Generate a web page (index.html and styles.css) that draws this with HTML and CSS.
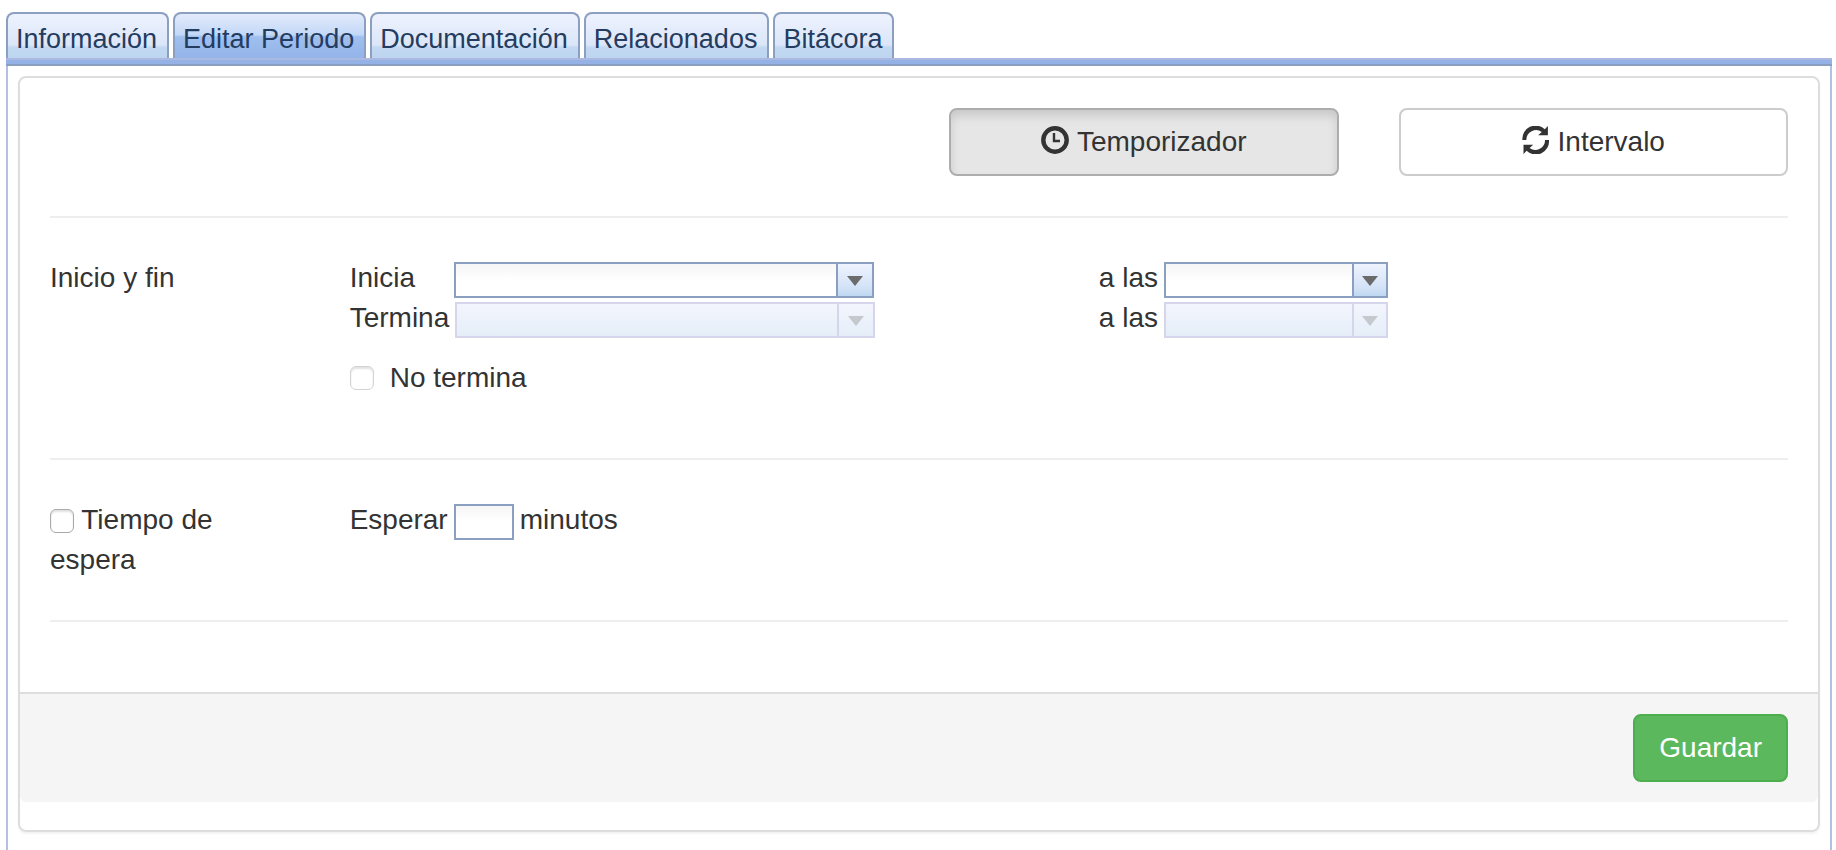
FILE: index.html
```html
<!DOCTYPE html>
<html lang="es">
<head>
<meta charset="utf-8">
<title>Editar Periodo</title>
<link rel="stylesheet" href="styles.css">
</head>
<body>
<div class="tabs" role="tablist">
  <button type="button" class="tab" role="tab">Información</button>
  <button type="button" class="tab tab-active" role="tab" aria-selected="true">Editar Periodo</button>
  <button type="button" class="tab" role="tab">Documentación</button>
  <button type="button" class="tab" role="tab">Relacionados</button>
  <button type="button" class="tab" role="tab">Bitácora</button>
</div>
<div class="tab-bar"></div>
<main class="tab-content">
  <form class="panel">
    <div class="panel-body">
      <div class="row row-modes">
        <button type="button" class="btn btn-timer active" aria-pressed="true">
          <svg class="icon" viewBox="0 0 28 28" aria-hidden="true"><circle cx="14" cy="14" r="11.7" fill="none" stroke="currentColor" stroke-width="4.4"/><path d="M13 7v8h6" fill="none" stroke="currentColor" stroke-width="2.400"/></svg>
          <span>Temporizador</span>
        </button>
        <button type="button" class="btn btn-interval" aria-pressed="false">
          <svg class="icon" viewBox="0 0 28 28" aria-hidden="true"><path d="M.4 14A13.300 13.300 0 0 1 22.800 3.200L25.900 0V9.300H16.200L19.800 5.900A9.900 9.900 0 0 0 4.300 14Z" fill="currentColor"/><path d="M27 14A13.300 13.300 0 0 1 4.600 24.800L1.500 28V18.700H11.200L7.600 22.100A9.900 9.900 0 0 0 23.100 14Z" fill="currentColor"/></svg>
          <span>Intervalo</span>
        </button>
      </div>
      <hr class="rule">
      <div class="row row-range">
        <div class="row-title">Inicio y fin</div>
        <div class="row-main">
          <div class="field">
            <label for="start-date" class="field-label">Inicia</label>
            <span class="combo combo-date"><input type="text" id="start-date" class="combo-input"><button type="button" class="combo-button" aria-label="Elegir fecha de inicio"><svg class="arrow" viewBox="0 0 18 12" aria-hidden="true"><path d="M1 1h16L9 11Z"/></svg></button></span>
          </div>
          <div class="field">
            <label for="end-date" class="field-label">Termina</label>
            <span class="combo combo-date combo-disabled"><input type="text" id="end-date" class="combo-input" disabled><button type="button" class="combo-button" disabled aria-label="Elegir fecha de término"><svg class="arrow" viewBox="0 0 18 12" aria-hidden="true"><path d="M1 1h16L9 11Z"/></svg></button></span>
          </div>
          <label class="never-ends"><input type="checkbox" class="check" disabled>No termina</label>
        </div>
        <div class="row-side">
          <div class="field">
            <label for="start-time">a las</label>
            <span class="combo combo-time"><input type="text" id="start-time" class="combo-input"><button type="button" class="combo-button" aria-label="Elegir hora de inicio"><svg class="arrow" viewBox="0 0 18 12" aria-hidden="true"><path d="M1 1h16L9 11Z"/></svg></button></span>
          </div>
          <div class="field">
            <label for="end-time">a las</label>
            <span class="combo combo-time combo-disabled"><input type="text" id="end-time" class="combo-input" disabled><button type="button" class="combo-button" disabled aria-label="Elegir hora de término"><svg class="arrow" viewBox="0 0 18 12" aria-hidden="true"><path d="M1 1h16L9 11Z"/></svg></button></span>
          </div>
        </div>
      </div>
      <hr class="rule">
      <div class="row">
        <label class="row-title wait-label"><input type="checkbox" class="check"> Tiempo de espera</label>
        <div class="row-main">
          <div class="field">
            <label for="wait" class="field-label">Esperar</label>
            <input type="text" id="wait" class="minutes">
            <span>minutos</span>
          </div>
        </div>
      </div>
      <hr class="rule">
    </div>
    <div class="panel-footer">
      <button type="submit" class="btn btn-save">Guardar</button>
    </div>
  </form>
</main>
</body>
</html>
```
FILE: styles.css
```css
* {
  box-sizing: border-box;
}

html,
body {
  height: 100%;
}

body {
  display: flex;
  flex-direction: column;
  margin: 0;
  padding: 12px 4px 0 6px;
  background: #fff;
  color: #333;
  font: 28px/40px "Liberation Sans", Arial, sans-serif;
}

button,
input {
  font: inherit;
  color: inherit;
}

/* Tabs */
.tabs {
  display: flex;
  gap: 4px;
}

.tab {
  height: 46px;
  padding: 6px 10px 0 8px;
  border: 2px solid #8ba0c0;
  border-bottom: 0;
  border-radius: 8px 8px 0 0;
  background: linear-gradient(#eef2fe 0, #dbe6f8 70%, #c3d9f2 76%, #bdd5f0 100%);
  color: #243c5f;
  font-size: 27px;
  line-height: 38px;
}

.tab-active {
  background: linear-gradient(#e2ebfb 0, #c3d8f8 47%, #9fbfee 52%, #94b4ea 100%);
}

.tab-bar {
  height: 8px;
  flex: none;
  border-top: 2px solid #abb8e0;
  border-bottom: 2px solid #8a9fc0;
  background: #94b2e5;
}

.tab-content {
  flex: 1 0 auto;
  padding: 10px 10px 18px;
  border: solid #b3bfe3;
  border-width: 0 2px;
}

/* Panel */
.panel {
  padding-bottom: 28px;
  border: 2px solid #ddd;
  border-radius: 8px;
  box-shadow: 0 2px 2px rgba(0, 0, 0, 0.05);
}

.panel-body {
  padding: 30px;
}

.panel-footer {
  display: flex;
  justify-content: flex-end;
  padding: 20px 30px;
  border-top: 2px solid #ddd;
  border-radius: 0 0 6px 6px;
  background: #f5f5f5;
}

.rule {
  height: 2px;
  margin: 40px 0;
  border: 0;
  background: #eee;
}

.row {
  display: grid;
  grid-template-columns: repeat(12, minmax(0, 1fr));
  column-gap: 60px;
}

.row-title {
  grid-column: 1 / span 2;
}

.row-main {
  grid-column: 3 / span 5;
}

.row-side {
  grid-column: 8 / span 5;
}

.row-range {
  padding-bottom: 20px;
}

/* Buttons */
.btn {
  display: flex;
  align-items: center;
  justify-content: center;
  gap: 8px;
  height: 68px;
  padding: 0 24px;
  border: 2px solid #ccc;
  border-radius: 8px;
  background: #fff;
}

.btn-timer {
  grid-column: 7 / span 3;
}

.btn-interval {
  grid-column: 10 / span 3;
}

.btn.active {
  border-color: #adadad;
  background: #e6e6e6;
  box-shadow: inset 0 6px 10px rgba(0, 0, 0, 0.125);
}

.btn-save {
  border-color: #4cae4c;
  background: #5cb85c;
  color: #fff;
}

.icon {
  width: 28px;
  height: 28px;
  margin-bottom: 4px;
}

/* Fields */
.field {
  display: flex;
  align-items: flex-end;
  gap: 6px;
  height: 40px;
}

.field-label {
  min-width: 98px;
}

.combo {
  display: flex;
  height: 36px;
  border: 2px solid #8ba0c0;
}

.combo-date {
  width: 420px;
}

.combo-time {
  width: 224px;
}

.combo-input {
  flex: 1;
  min-width: 0;
  padding: 0 4px;
  border: 0;
  background: linear-gradient(#f6f6f6, #fff 50%);
}

.combo-button {
  display: flex;
  align-items: center;
  justify-content: center;
  width: 36px;
  padding: 2px 0 0;
  border: 0;
  border-left: 2px solid #8ba0c0;
  background: linear-gradient(#eff3fe, #d2e2f7 75%, #bfd8f2);
}

.combo-time .combo-button {
  width: 34px;
}

.arrow {
  width: 18px;
  height: 12px;
  fill: #6b6b6b;
}

.combo-disabled,
.combo-disabled .combo-button {
  border-color: #d5d6ec;
}

.combo-disabled .combo-input,
.combo-disabled .combo-button {
  background: linear-gradient(#f3f5fd, #e5eef8);
}

.combo-disabled .arrow {
  fill: #c5c8cd;
}

.minutes {
  width: 60px;
  height: 36px;
  padding: 0 4px;
  border: 2px solid #8ba0c0;
  background: linear-gradient(#f6f6f6, #fff 50%);
}

.check {
  appearance: none;
  width: 24px;
  height: 24px;
  margin: 0;
  border: 1px solid #a9a9a9;
  border-radius: 6px;
  background: #fff;
  box-shadow: inset 0 2px 2px rgba(0, 0, 0, 0.12);
}

.check:disabled {
  border-color: #d3d3d3;
}

.wait-label .check {
  vertical-align: -4px;
}

.never-ends {
  display: flex;
  align-items: center;
  gap: 16px;
  margin-top: 20px;
}
```
